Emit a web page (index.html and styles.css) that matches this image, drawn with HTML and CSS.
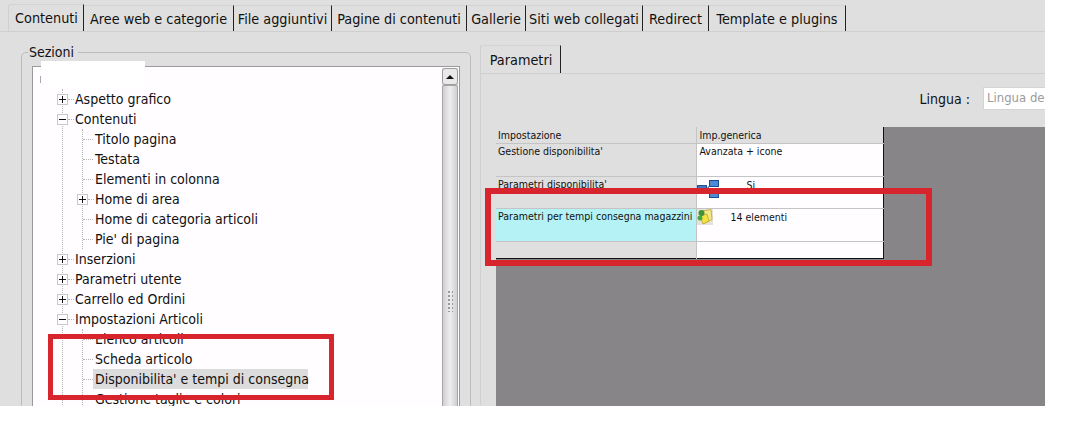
FILE: index.html
```html
<!DOCTYPE html>
<html lang="it">
<head>
<meta charset="utf-8">
<title>Parametri</title>
<link rel="stylesheet" href="styles.css">
</head>
<body>
<div class="app">
  <nav class="tabs">
    <span class="tab t1 active">Contenuti</span>
    <span class="tab t2">Aree web e categorie</span>
    <span class="tab t3">File aggiuntivi</span>
    <span class="tab t4">Pagine di contenuti</span>
    <span class="tab t5">Gallerie</span>
    <span class="tab t6">Siti web collegati</span>
    <span class="tab t7">Redirect</span>
    <span class="tab t8">Template e plugins</span>
  </nav>
  <main class="main">
    <fieldset class="sections">
      <legend>Sezioni</legend>
      <div class="treebox">
        <div class="tree">
          <div class="rootrow"><span class="rootbox"></span></div>
          <div class="group lvl1">
            <div class="row"><span class="exp plus"></span><span class="dash"></span><span>Aspetto grafico</span></div>
            <div class="row"><span class="exp minus"></span><span class="dash"></span><span>Contenuti</span></div>
            <div class="group lvl2">
              <div class="row"><span class="dash long"></span><span>Titolo pagina</span></div>
              <div class="row"><span class="dash long"></span><span>Testata</span></div>
              <div class="row"><span class="dash long"></span><span>Elementi in colonna</span></div>
              <div class="row"><span class="exp plus"></span><span class="dash"></span><span>Home di area</span></div>
              <div class="row"><span class="dash long"></span><span>Home di categoria articoli</span></div>
              <div class="row"><span class="dash long"></span><span>Pie' di pagina</span></div>
            </div>
            <div class="row"><span class="exp plus"></span><span class="dash"></span><span>Inserzioni</span></div>
            <div class="row"><span class="exp plus"></span><span class="dash"></span><span>Parametri utente</span></div>
            <div class="row"><span class="exp plus"></span><span class="dash"></span><span>Carrello ed Ordini</span></div>
            <div class="row"><span class="exp minus"></span><span class="dash"></span><span>Impostazioni Articoli</span></div>
            <div class="group lvl2">
              <div class="row"><span class="dash long"></span><span>Elenco articoli</span></div>
              <div class="row"><span class="dash long"></span><span>Scheda articolo</span></div>
              <div class="row"><span class="dash long"></span><span class="selected">Disponibilita' e tempi di consegna</span></div>
              <div class="row"><span class="dash long"></span><span>Gestione taglie e colori</span></div>
            </div>
          </div>
        </div>
        <div class="scrollbar">
          <div class="scrollbtn"><span class="arrow"></span></div>
          <div class="thumb"><span class="grip"></span></div>
        </div>
      </div>
    </fieldset>
    <section class="panel">
      <div class="subtabs"><span class="tab subtab">Parametri</span></div>
      <div class="langrow">
        <span class="langlabel">Lingua :</span>
        <span class="langinput">Lingua de</span>
      </div>
      <div class="gridarea">
        <table class="grid">
          <thead>
            <tr><th class="c1">Impostazione</th><th class="c2">Imp.generica</th></tr>
          </thead>
          <tbody>
            <tr class="r33"><td class="c1">Gestione disponibilita'</td><td class="c2 val">Avanzata + icone</td></tr>
            <tr class="r32"><td class="c1">Parametri disponibilita'</td><td class="c2">
              <div class="cellflex">
                <svg class="ico net" width="23" height="18" viewBox="0 0 23 18">
                  <path d="M9 8h2M11 8L14 3M11 8l3 7" stroke="#2f5f9f" fill="none"/>
                  <rect x="0.5" y="5.5" width="9" height="7" fill="#3f76c6" stroke="#27508f"/>
                  <rect x="12.5" y="0.5" width="9" height="6" fill="#4c8ad8" stroke="#1d4a8c"/>
                  <rect x="12.5" y="11.5" width="9" height="6" fill="#4c8ad8" stroke="#1d4a8c"/>
                </svg>
                <span class="si">Si</span>
              </div></td></tr>
            <tr class="r33"><td class="c1 hl">Parametri per tempi consegna magazzini</td><td class="c2">
              <div class="cellflex">
                <svg class="ico" width="16" height="16" viewBox="0 0 16 16">
                  <rect width="16" height="16" fill="#e4e2da"/>
                  <path d="M6 2l8-1.5 1 10-8 4z" fill="#f5e88a" stroke="#c9b24a"/>
                  <path d="M3 7l7-2 2 7-6 3z" fill="#f4e33c" stroke="#c4b040"/>
                  <circle cx="4.5" cy="4" r="3" fill="#3d9436"/>
                  <circle cx="3" cy="9" r="2.5" fill="#4aa544"/>
                </svg>
                <span class="count">14 elementi</span>
              </div></td></tr>
            <tr class="r17"><td class="c1"></td><td class="c2"></td></tr>
          </tbody>
        </table>
      </div>
    </section>
  </main>
  <div class="whiteout"></div>
  <div class="mark mark-left"></div>
  <div class="mark mark-right"></div>
</div>
</body>
</html>
```
FILE: styles.css
```css
* { box-sizing: border-box; }
html, body { margin: 0; padding: 0; background: #fff; }
body { width: 1083px; height: 439px; overflow: hidden; font-family: "DejaVu Sans Condensed", "DejaVu Sans", sans-serif; font-stretch: condensed; color: #111; }
.app { position: relative; width: 1045px; height: 406px; overflow: hidden; background: #dfdfdf; }

.tabs { display: flex; height: 32px; padding: 5px 0 0 8px; border-bottom: 1px solid #cfcfcf; }
.tab { display: flex; align-items: center; justify-content: center; height: 26px; font-size: 14.3px; white-space: nowrap; border-right: 1px solid #222; border-top: 1px solid #d4d4d4; }
.t1 { width: 76px; height: 27px; margin-top: -1px; padding-left: 1px; border-left: 1px solid #d0d0d0; border-top-left-radius: 3px; }
.t2 { width: 150px; }
.t3 { width: 98px; }
.t4 { width: 135px; }
.t5 { width: 59px; }
.t6 { width: 117px; }
.t7 { width: 66px; }
.t8 { width: 137px; }

.main { display: flex; align-items: flex-start; padding: 12px 0 0 21px; }

.sections { width: 450px; height: 400px; margin: 0; padding: 0 10px; border: 1px solid #bcbcbc; border-radius: 5px; flex: none; }
.sections legend { padding: 0 4px 0 1px; margin-left: -4px; height: 16px; line-height: 16px; font-size: 14px; }
.treebox { display: flex; width: 428px; height: 344px; margin-top: 6px; background: #fffdff; border: 1px solid #9a9a9a; }

.tree { flex: 1; font-size: 14px; padding-top: 2px; }
.rootrow { height: 20px; display: flex; align-items: center; padding-left: 7px; }
.rootbox { width: 3px; height: 7px; border-left: 1px solid #aaa; }
.group { border-left: 1px dotted #b5b5b5; }
.lvl1 { margin-left: 29px; }
.lvl2 { margin-left: 19px; }
.row { display: flex; align-items: center; height: 20px; white-space: nowrap; }
.exp { flex: none; width: 11px; height: 11px; margin-left: -6px; border: 1px solid #c8c8c8; background-color: #fffdff; background-repeat: no-repeat; }
.plus { background-image: linear-gradient(#111, #111), linear-gradient(#111, #111); background-size: 7px 1px, 1px 7px; background-position: 1px 4px, 4px 1px; }
.minus { background-image: linear-gradient(#111, #111); background-size: 7px 1px; background-position: 1px 4px; }
.dash { flex: none; width: 6px; margin-right: 1px; border-top: 1px dotted #b5b5b5; }
.dash.long { width: 9px; margin-right: 2px; }
.lvl2 .dash { margin-right: 1px; }
.lvl2 .dash.long { margin-right: 2px; width: 10px; }
.selected { display: block; margin-left: -2px; padding: 0 2px; height: 20px; line-height: 20px; width: 215px; background: #dcdcdc; }

.scrollbar { flex: none; width: 16px; margin: 1px 1px 0 0; display: flex; flex-direction: column; background: #d5d5d5; }
.scrollbtn { height: 17px; display: flex; align-items: center; justify-content: center; background: #e9e9e9; border: 1px solid #9d9d9d; border-radius: 3px; }
.arrow { width: 0; height: 0; border-left: 4px solid transparent; border-right: 4px solid transparent; border-bottom: 4px solid #111; }
.thumb { flex: 1; display: flex; justify-content: center; padding-top: 204px; border: 1px solid #a5a5a5; border-radius: 2px; background: linear-gradient(90deg, #cfcfd4, #eeeeee 50%, #cfcfd4); }
.grip { width: 6px; height: 22px; background-image: radial-gradient(circle, #9a9a9a 1px, transparent 1px); background-size: 4px 4px; }

.panel { flex: 1; margin: 1px 0 0 9px; border-left: 1px solid #d0d0d0; height: 360px; min-width: 0; }
.subtabs { display: flex; height: 29px; border-bottom: 1px solid #cfcfcf; }
.subtab { width: 80px; height: 28px; border-top-left-radius: 3px; padding-left: 1px; }
.langrow { display: flex; align-items: center; justify-content: flex-end; height: 23px; margin-top: 13px; }
.langlabel { font-size: 14px; margin-right: 13px; }
.langinput { flex: none; width: 62px; height: 23px; line-height: 20px; padding-left: 3px; overflow: hidden; white-space: nowrap; font-size: 13px; color: #9b9b9b; background: #fff; border: 1px solid #d4d4d4; border-right: 0; }
.gridarea { margin: 17px 0 0 15px; height: 279px; background: #878587; }
.grid { width: 388px; table-layout: fixed; border-collapse: collapse; font-size: 10.5px; background: #fffdff; border-right: 1px solid #111; border-bottom: 1px solid #111; }
.grid th { height: 16px; font-weight: normal; text-align: left; padding: 0 2px; background: #dfdfdf; border-right: 1px solid #c4c4c4; }
.grid td { vertical-align: top; padding: 1px 2px 0; border-top: 1px solid #c4c4c4; border-right: 1px solid #c4c4c4; white-space: nowrap; }
.grid th.c2, .grid td.c2 { border-right: 0; }
.grid th.c2 { padding-left: 3px; }
.grid .c1 { width: 200px; }
.grid td.c1 { background: #dfdfdf; }
.grid td.hl { background: #b4f2f5; }
.grid td.val { padding-left: 3px; }
.r33 { height: 33px; }
.r32 { height: 32px; }
.r17 { height: 17px; }
.grid td:has(.cellflex) { padding: 0; }
.cellflex { display: flex; align-items: flex-start; }
.ico { flex: none; display: block; }
.net { margin-top: 3px; }
.si { margin: 2px 0 0 27px; }
.count { margin: 2px 0 0 18px; }

.whiteout { position: absolute; left: 41px; top: 61px; width: 104px; height: 27px; background: #fff; }
.mark { position: absolute; border: 5px solid #d8252d; }
.mark-left { left: 48px; top: 334px; width: 286px; height: 66px; }
.mark-right { left: 485px; top: 188px; width: 447px; height: 78px; border-width: 6px; }
```
